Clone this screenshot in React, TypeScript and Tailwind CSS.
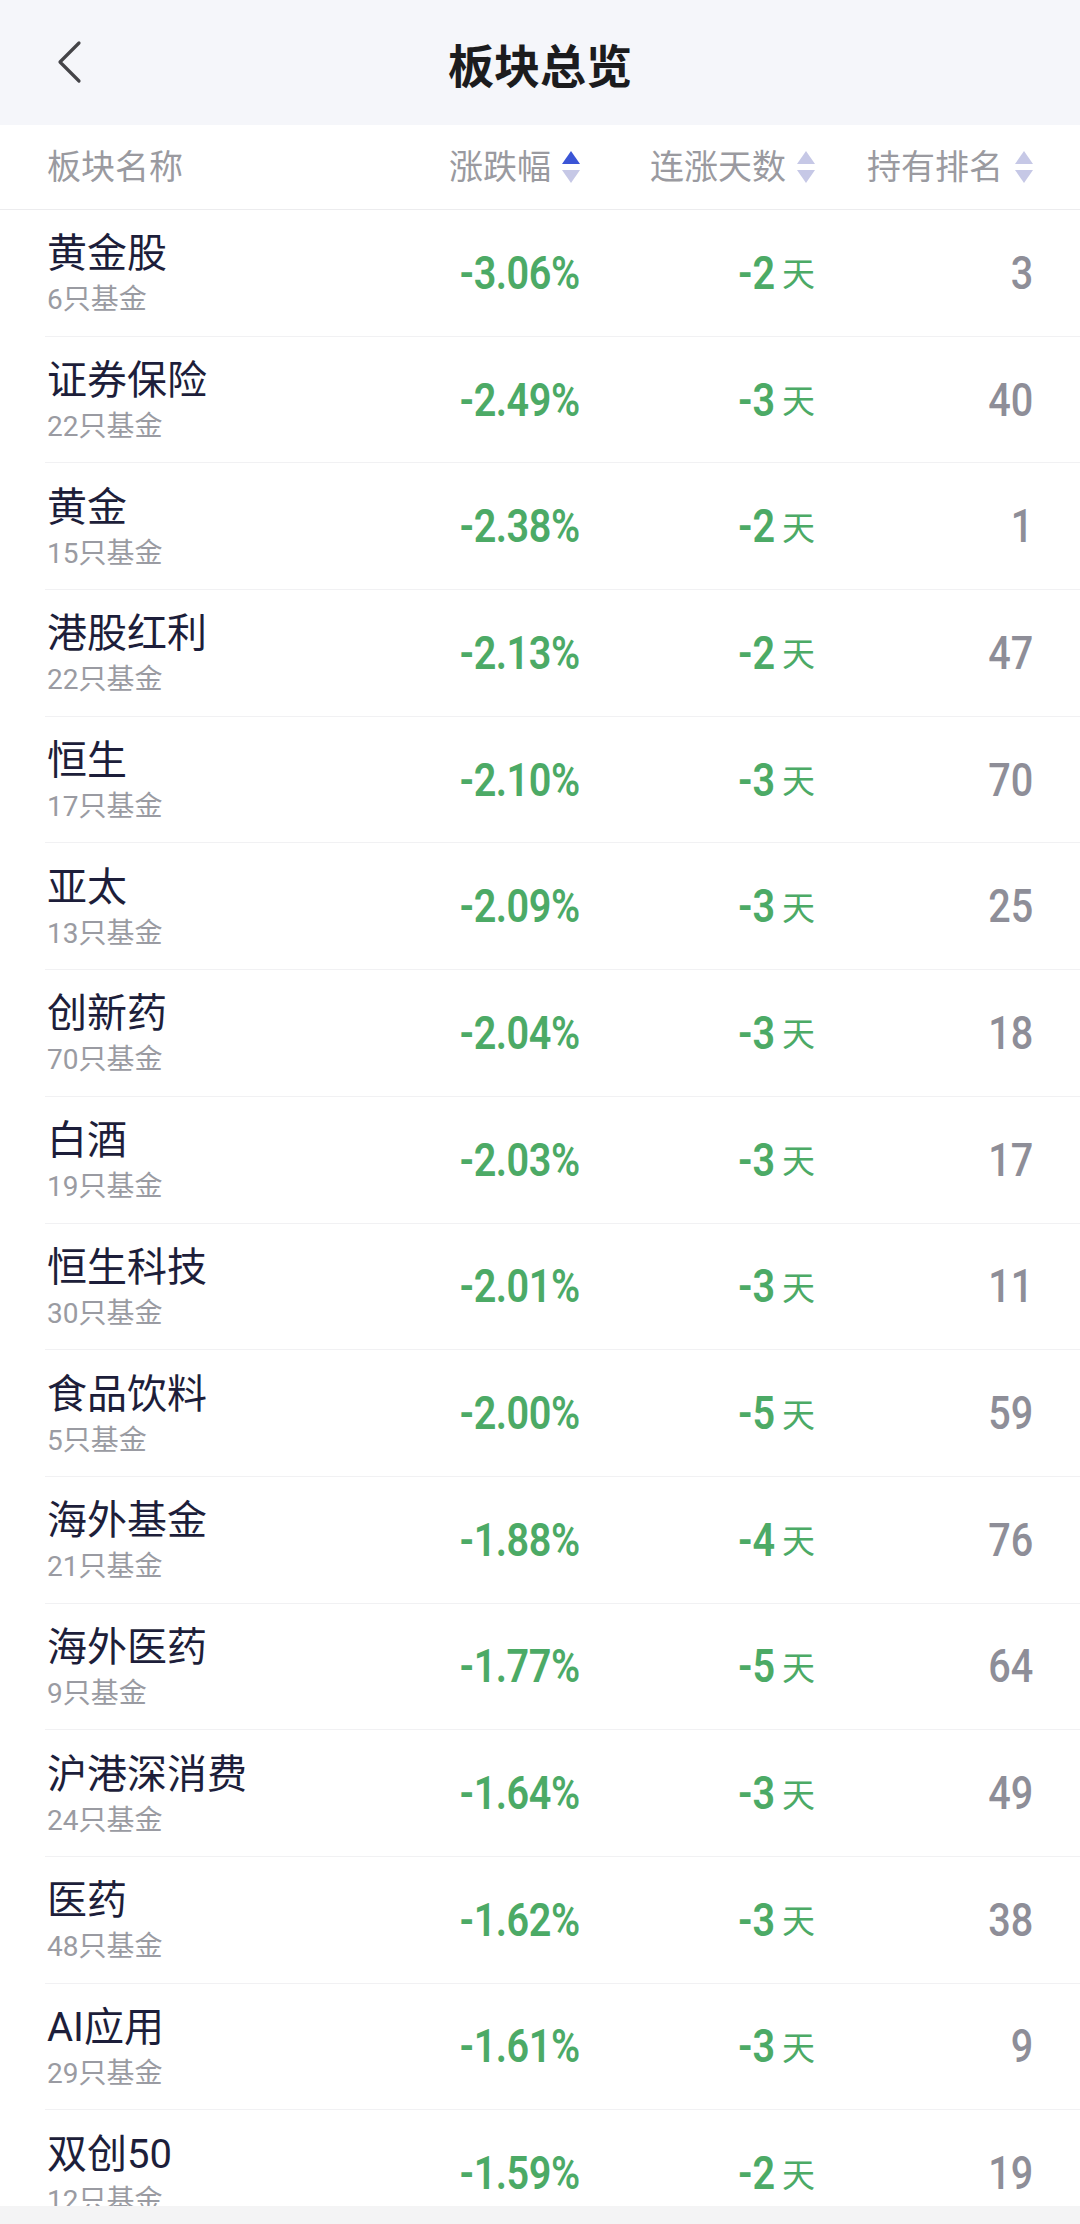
import React from "react";

type Row = { name: string; count: number; pct: string; days: string; rank: number };

const rows: Row[] = [
  { name: "黄金股", count: 6, pct: "-3.06%", days: "-2", rank: 3 },
  { name: "证券保险", count: 22, pct: "-2.49%", days: "-3", rank: 40 },
  { name: "黄金", count: 15, pct: "-2.38%", days: "-2", rank: 1 },
  { name: "港股红利", count: 22, pct: "-2.13%", days: "-2", rank: 47 },
  { name: "恒生", count: 17, pct: "-2.10%", days: "-3", rank: 70 },
  { name: "亚太", count: 13, pct: "-2.09%", days: "-3", rank: 25 },
  { name: "创新药", count: 70, pct: "-2.04%", days: "-3", rank: 18 },
  { name: "白酒", count: 19, pct: "-2.03%", days: "-3", rank: 17 },
  { name: "恒生科技", count: 30, pct: "-2.01%", days: "-3", rank: 11 },
  { name: "食品饮料", count: 5, pct: "-2.00%", days: "-5", rank: 59 },
  { name: "海外基金", count: 21, pct: "-1.88%", days: "-4", rank: 76 },
  { name: "海外医药", count: 9, pct: "-1.77%", days: "-5", rank: 64 },
  { name: "沪港深消费", count: 24, pct: "-1.64%", days: "-3", rank: 49 },
  { name: "医药", count: 48, pct: "-1.62%", days: "-3", rank: 38 },
  { name: "AI应用", count: 29, pct: "-1.61%", days: "-3", rank: 9 },
  { name: "双创50", count: 12, pct: "-1.59%", days: "-2", rank: 19 },
];

function SortIcon({ active }: { active?: boolean }) {
  return (
    <svg width="18" height="32" viewBox="0 0 18 32" className="shrink-0">
      <polygon points="0,13 9,0 18,13" fill={active ? "#3b55d6" : "#c6c8e6"} />
      <polygon points="0,19 18,19 9,32" fill="#c6c8e6" />
    </svg>
  );
}

export default function App() {
  return (
    <div
      className="w-[1080px] h-[2224px] flex flex-col overflow-hidden bg-white"
      style={{ fontFamily: 'Roboto, "Noto Sans CJK SC", sans-serif' }}
    >
      {/* Top bar */}
      <div className="h-[125px] shrink-0 bg-[#f5f6fa] relative flex items-center justify-center">
        <div className="absolute left-[56px] top-[40px]">
          <svg width="26" height="44" viewBox="0 0 26 44">
            <polyline
              points="23,3 4,22 23,41"
              fill="none"
              stroke="#444448"
              strokeWidth="3.2"
              strokeLinecap="round"
              strokeLinejoin="round"
            />
          </svg>
        </div>
        <div className="text-[46px] font-bold text-[#1c1c1e] leading-none" style={{ fontFamily: '"Noto Sans CJK SC", sans-serif' }}>
          板块总览
        </div>
      </div>

      {/* Column header */}
      <div className="h-[85px] shrink-0 border-b border-[#ececee] grid grid-cols-[1fr_200px_235px_218px] items-center pl-[47px] pr-[47px] text-[34px] text-[#9a9aa0]">
        <div>板块名称</div>
        <div className="flex items-center justify-end gap-[11px]">
          <span>涨跌幅</span>
          <SortIcon active />
        </div>
        <div className="flex items-center justify-end gap-[11px]">
          <span>连涨天数</span>
          <SortIcon />
        </div>
        <div className="flex items-center justify-end gap-[12px]">
          <span>持有排名</span>
          <SortIcon />
        </div>
      </div>

      {/* Rows */}
      <div className="flex-1 overflow-hidden">
        {rows.map((r) => (
          <div
            key={r.name}
            className="h-[126.7px] ml-[45px] pl-[2px] pr-[47px] border-b border-[#f1f1f3] grid grid-cols-[1fr_200px_235px_218px] items-center"
          >
            <div className="flex flex-col pt-[5px]">
              <div className="text-[40px] leading-[50px] text-[#1d1e3a]">{r.name}</div>
              <div className="text-[28px] leading-[42px] text-[#9a9ba2]">{r.count}只基金</div>
            </div>
            <div className="flex justify-end">
              <span className="inline-block origin-right scale-x-[0.86] text-[46px] font-semibold text-[#4caa66] leading-none tracking-[-0.5px]">
                {r.pct}
              </span>
            </div>
            <div className="flex justify-end items-center text-[#4caa66]">
              <span className="inline-block origin-right scale-x-[0.86] text-[46px] font-semibold leading-none">
                {r.days}
              </span>
              <span className="text-[33px] leading-none ml-[7px]" style={{ fontFamily: '"Noto Sans CJK SC", sans-serif' }}>天</span>
            </div>
            <div className="flex justify-end">
              <span className="inline-block origin-right scale-x-[0.86] text-[46px] font-medium text-[#8e8e98] leading-none">
                {r.rank}
              </span>
            </div>
          </div>
        ))}
      </div>

      {/* Bottom system bar */}
      <div className="h-[18px] shrink-0 bg-[#f4f4f5]" />
    </div>
  );
}
